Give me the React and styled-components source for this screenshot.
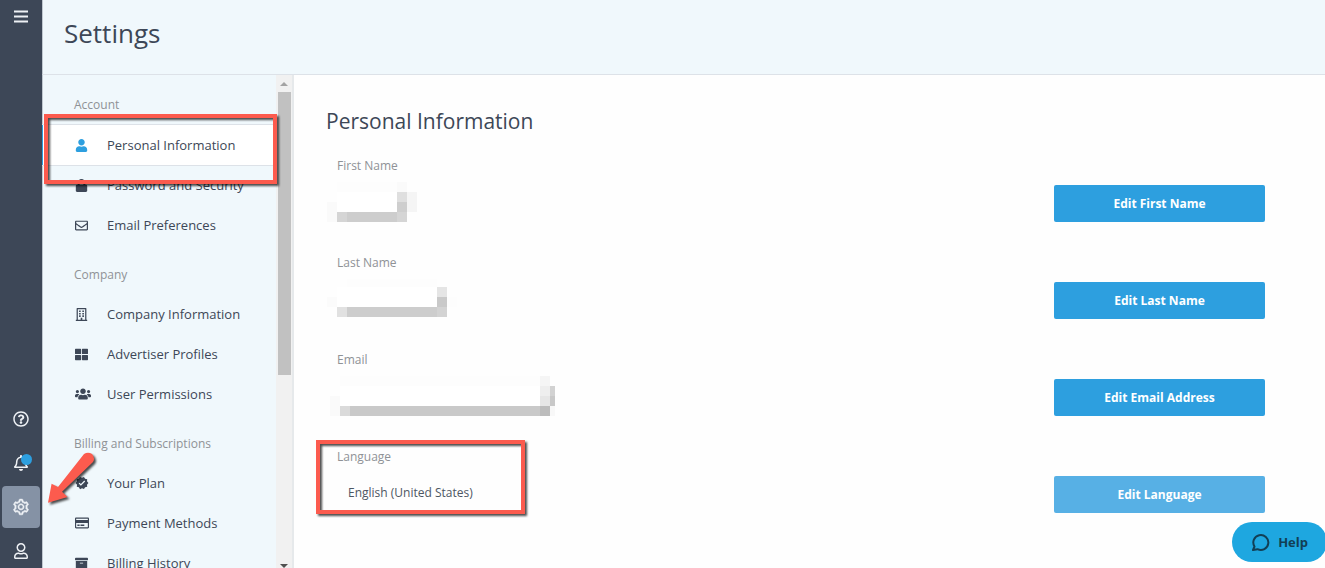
import styled, { createGlobalStyle, css } from 'styled-components';
import {
	FaArchive,
	FaLock,
	FaRegBell,
	FaRegBuilding,
	FaRegCreditCard,
	FaRegEnvelope,
	FaRegQuestionCircle,
	FaRegUser,
	FaThLarge,
	FaUser,
	FaUsers
} from 'react-icons/fa';
import { MdVerified } from 'react-icons/md';
import { AiOutlineSetting } from 'react-icons/ai';

const GlobalStyle = createGlobalStyle`
	* {
		box-sizing: border-box;
	}
	body {
		margin: 0;
		background: #fefefe;
		color: #3d4757;
		font-family: 'Open Sans', 'Noto Sans', sans-serif;
		font-size: 13px;
		line-height: 20px;
	}
	button {
		font-family: inherit;
		border: none;
		cursor: pointer;
	}
`;

const Page = styled.div`
	display: flex;
	height: 100vh;
	overflow: hidden;
`;

const Rail = styled.nav`
	display: flex;
	flex: none;
	flex-direction: column;
	justify-content: space-between;
	align-items: center;
	width: 42px;
	padding-top: 5px;
	background: #3d4757;
`;
const RailGroup = styled.div`
	display: flex;
	flex-direction: column;
	gap: 2px;
	margin-bottom: -4px;
`;
const RailButton = styled.button`
	position: relative;
	display: flex;
	justify-content: center;
	align-items: center;
	width: 38px;
	height: ${(props) => (props.$short ? '24px' : '42px')};
	padding: 0;
	border-radius: 4px;
	background: ${(props) => (props.$active ? '#8592a5' : 'transparent')};
	color: #eef1f5;
	font-size: 16px;
`;
const Dot = styled.span`
	position: absolute;
	top: 12px;
	right: 8px;
	width: 11px;
	height: 11px;
	border-radius: 50%;
	background: #2d9fdf;
`;
const ArrowSvg = styled.svg`
	position: absolute;
	z-index: 3;
	left: 43px;
	top: -36px;
	overflow: visible;
	filter: drop-shadow(2px 2px 1px rgba(0, 0, 0, 0.7));
	pointer-events: none;
`;

const Main = styled.div`
	display: flex;
	flex: 1;
	flex-direction: column;
	min-width: 0;
`;
const Header = styled.header`
	flex: none;
	padding: 15px 21px 23px;
	border-bottom: 1px solid #dde2e8;
	border-left: 1px solid #c0c8d0;
	background: #f0f8fc;
`;
const PageTitle = styled.h1`
	margin: 0;
	font-size: 26px;
	font-weight: 400;
	line-height: 36px;
`;
const Body = styled.div`
	display: flex;
	flex: 1;
	min-height: 0;
`;

const Sidebar = styled.aside`
	position: relative;
	display: flex;
	flex: none;
	width: 252px;
	border-right: 2px solid #e6e9eb;
	background: #f0f8fc;
`;
const NavScroll = styled.nav`
	flex: 1;
	overflow-y: auto;
	scrollbar-width: none;
	box-shadow: inset 1px 0 #c0c8d0;
`;
const NavHeading = styled.h2`
	margin: 0;
	padding: 20px 0 9px 32px;
	color: #8f9296;
	font-size: 12px;
	font-weight: 400;
`;
const NavLink = styled.a`
	display: flex;
	align-items: center;
	height: 40px;
	padding-left: 32px;
	border-left: 1px solid transparent;
	color: #3d4757;
	font-weight: 500;
	text-decoration: none;
	${(props) =>
		props.$active &&
		css`
			margin-top: 1px;
			border-left-color: #2d9fdf;
			background: #fff;
			box-shadow: 0 -1px #dde2e8, 0 1px #dde2e8;
		`}
`;
const NavIcon = styled.span`
	display: flex;
	width: 32px;
	color: ${(props) => (props.$active ? '#2d9fdf' : 'inherit')};
	font-size: ${(props) => props.$size}px;
`;

const ScrollBar = styled.div`
	display: flex;
	flex: none;
	flex-direction: column;
	align-items: center;
	width: 16px;
	background: #f1f1f1;
`;
const ScrollEnd = styled.div`
	display: flex;
	flex: none;
	justify-content: center;
	align-items: center;
	height: ${(props) => (props.$down ? '5px' : '17px')};
`;
const ScrollTrack = styled.div`
	flex: 1;
	width: 13px;
`;
const ScrollThumb = styled.div`
	height: 60%;
	background: #c1c1c1;
`;

const frame = css`
	position: absolute;
	z-index: 2;
	border: 4px solid #fc5b4e;
	filter: drop-shadow(2px 2px 1px rgba(0, 0, 0, 0.7));
	pointer-events: none;
`;
const NavFrame = styled.div`
	${frame}
	top: 39px;
	left: 2px;
	width: 233px;
	height: 70px;
`;
const FieldFrame = styled.div`
	${frame}
	top: -7px;
	left: -21px;
	width: 209px;
	height: 74px;
`;

const Content = styled.main`
	flex: 1;
	min-width: 0;
	padding: 31px 60px 0 32px;
`;
const SectionTitle = styled.h2`
	margin: 0 0 20px;
	font-size: 21px;
	font-weight: 400;
	line-height: 30px;
`;
const Fields = styled.dl`
	display: flex;
	flex-direction: column;
	gap: 31px;
	margin: 0;
`;
const FieldRow = styled.div`
	display: flex;
	justify-content: space-between;
	align-items: flex-end;
	height: 66px;
	padding-left: 11px;
`;
const Field = styled.div`
	position: relative;
	align-self: flex-start;
`;
const FieldLabel = styled.dt`
	color: #8f9296;
	font-size: 12px;
`;
const FieldValue = styled.dd`
	margin: 16px 0 0 11px;
	color: #4d5663;
	font-size: 12px;
`;
const MaskedValue = styled.dd`
	margin: 6px 0 0 -10px;
	svg {
		display: block;
	}
`;
const EditButton = styled.button`
	width: 211px;
	height: 37px;
	border-radius: 2px;
	background: ${(props) => (props.$light ? '#57b0e5' : '#2d9fdf')};
	color: #fff;
	font-size: 12px;
	font-weight: 700;
`;

const HelpButton = styled.button`
	position: fixed;
	z-index: 4;
	right: -2px;
	bottom: 6px;
	display: flex;
	align-items: center;
	gap: 8px;
	height: 40px;
	padding: 0 19px;
	border-radius: 20px;
	background: #1ea7e0;
	color: #123f55;
	font-size: 13px;
	font-weight: 700;
`;

const sections = [
	{
		title: 'Account',
		items: [
			{ name: 'Personal Information', icon: FaUser, size: 13, active: true },
			{ name: 'Password and Security', icon: FaLock, size: 13 },
			{ name: 'Email Preferences', icon: FaRegEnvelope, size: 13 }
		]
	},
	{
		title: 'Company',
		items: [
			{ name: 'Company Information', icon: FaRegBuilding, size: 13 },
			{ name: 'Advertiser Profiles', icon: FaThLarge, size: 13 },
			{ name: 'User Permissions', icon: FaUsers, size: 16 }
		]
	},
	{
		title: 'Billing and Subscriptions',
		items: [
			{ name: 'Your Plan', icon: MdVerified, size: 14 },
			{ name: 'Payment Methods', icon: FaRegCreditCard, size: 14 },
			{ name: 'Billing History', icon: FaArchive, size: 13 }
		]
	}
];

// cells: [ x, y, width, height, fill ]
const fields = [
	{
		label: 'First Name',
		button: 'Edit First Name',
		cells: [
			[ 10, 0, 60, 10, '#fdfdfd' ],
			[ 70, 0, 10, 10, '#fafafa' ],
			[ 10, 10, 60, 20, '#fff' ],
			[ 70, 10, 10, 10, '#dfdfdf' ],
			[ 80, 10, 10, 20, '#f5f5f5' ],
			[ 0, 20, 10, 20, '#fafafa' ],
			[ 70, 20, 10, 10, '#cecece' ],
			[ 10, 30, 70, 10, '#d5d5d5' ],
			[ 20, 30, 50, 10, '#cdcdcd' ]
		]
	},
	{
		label: 'Last Name',
		button: 'Edit Last Name',
		cells: [
			[ 20, 0, 90, 8, '#fdfdfd' ],
			[ 10, 8, 100, 20, '#fff' ],
			[ 110, 8, 10, 10, '#e5e5e5' ],
			[ 0, 18, 10, 10, '#fbfbfb' ],
			[ 110, 18, 10, 10, '#c9c9c9' ],
			[ 120, 18, 10, 10, '#fdfdfd' ],
			[ 10, 28, 10, 10, '#e1e1e1' ],
			[ 20, 28, 90, 10, '#cdcdcd' ],
			[ 110, 28, 10, 10, '#d3d3d3' ]
		]
	},
	{
		label: 'Email',
		button: 'Edit Email Address',
		cells: [
			[ 13, 0, 200, 10, '#fdfdfd' ],
			[ 213, 0, 10, 10, '#f5f5f5' ],
			[ 13, 10, 200, 20, '#fff' ],
			[ 213, 10, 10, 10, '#eeeeee' ],
			[ 223, 10, 5, 10, '#d2d2d2' ],
			[ 3, 20, 10, 20, '#fafafa' ],
			[ 213, 20, 10, 10, '#e6e6e6' ],
			[ 223, 20, 5, 10, '#c8c8c8' ],
			[ 13, 30, 10, 10, '#dadada' ],
			[ 23, 30, 190, 10, '#c9c9c9' ],
			[ 213, 30, 10, 10, '#bcbcbc' ],
			[ 223, 30, 5, 10, '#f8f8f8' ]
		]
	},
	{ label: 'Language', button: 'Edit Language', value: 'English (United States)', light: true }
];

function MenuIcon() {
	return (
		<svg width="16" height="14" viewBox="0 0 16 14" stroke="currentColor" strokeWidth="2">
			<path d="M1 1.500h14M1 6.500h14M1 11.500h14" />
		</svg>
	);
}

function PointerArrow() {
	return (
		<ArrowSvg width="54" height="60" viewBox="0 0 54 60" aria-hidden="true">
			<path d="M3 52.700L6.600 33.700L13 37L39 4Q43 1.500 47 4Q50.500 8 48 12L17 41.700L22.500 47Z" fill="#fc5b4e" />
		</ArrowSvg>
	);
}

function Masked({ cells }) {
	return (
		<svg width="228" height="40" role="img" aria-label="Hidden value" shapeRendering="crispEdges">
			{cells.map(([ x, y, width, height, fill ]) => (
				<rect key={`${x}-${y}-${width}`} x={x} y={y} width={width} height={height} fill={fill} />
			))}
		</svg>
	);
}

function SideNav() {
	return (
		<Sidebar>
			<NavScroll aria-label="Settings">
				{sections.map((section) => (
					<section key={section.title}>
						<NavHeading>{section.title}</NavHeading>
						{section.items.map(({ name, icon: Icon, size, active }) => (
							<NavLink key={name} href="#" $active={active}>
								<NavIcon $size={size} $active={active}>
									<Icon />
								</NavIcon>
								{name}
							</NavLink>
						))}
					</section>
				))}
			</NavScroll>
			<ScrollBar aria-hidden="true">
				<ScrollEnd>
					<svg width="8" height="4">
						<path d="M0 4L4 0L8 4Z" fill="#a3a3a3" />
					</svg>
				</ScrollEnd>
				<ScrollTrack>
					<ScrollThumb />
				</ScrollTrack>
				<ScrollEnd $down>
					<svg width="8" height="4">
						<path d="M0 0H8L4 4Z" fill="#505050" />
					</svg>
				</ScrollEnd>
			</ScrollBar>
			<NavFrame />
		</Sidebar>
	);
}

function App() {
	return (
		<Page>
			<GlobalStyle />
			<Rail>
				<RailButton $short aria-label="Menu">
					<MenuIcon />
				</RailButton>
				<RailGroup>
					<RailButton aria-label="Help center">
						<FaRegQuestionCircle />
					</RailButton>
					<RailButton aria-label="Notifications">
						<FaRegBell />
						<Dot />
					</RailButton>
					<RailButton $active aria-label="Settings">
						<AiOutlineSetting size={18} stroke="currentColor" strokeWidth={30} />
						<PointerArrow />
					</RailButton>
					<RailButton aria-label="Profile">
						<FaRegUser />
					</RailButton>
				</RailGroup>
			</Rail>
			<Main>
				<Header>
					<PageTitle>Settings</PageTitle>
				</Header>
				<Body>
					<SideNav />
					<Content>
						<SectionTitle>Personal Information</SectionTitle>
						<Fields>
							{fields.map((field) => (
								<FieldRow key={field.label}>
									<Field>
										<FieldLabel>{field.label}</FieldLabel>
										{field.value ? (
											<FieldValue>{field.value}</FieldValue>
										) : (
											<MaskedValue>
												<Masked cells={field.cells} />
											</MaskedValue>
										)}
										{field.value && <FieldFrame />}
									</Field>
									<EditButton $light={field.light}>{field.button}</EditButton>
								</FieldRow>
							))}
						</Fields>
					</Content>
				</Body>
			</Main>
			<HelpButton>
				<svg width="19" height="19" viewBox="0 0 19 19" fill="none" stroke="currentColor" strokeWidth="2">
					<path d="M2 17L3.500 13.500A7.500 7.500 0 1 1 6.500 16.200Z" strokeLinejoin="round" />
				</svg>
				Help
			</HelpButton>
		</Page>
	);
}

export default App;
